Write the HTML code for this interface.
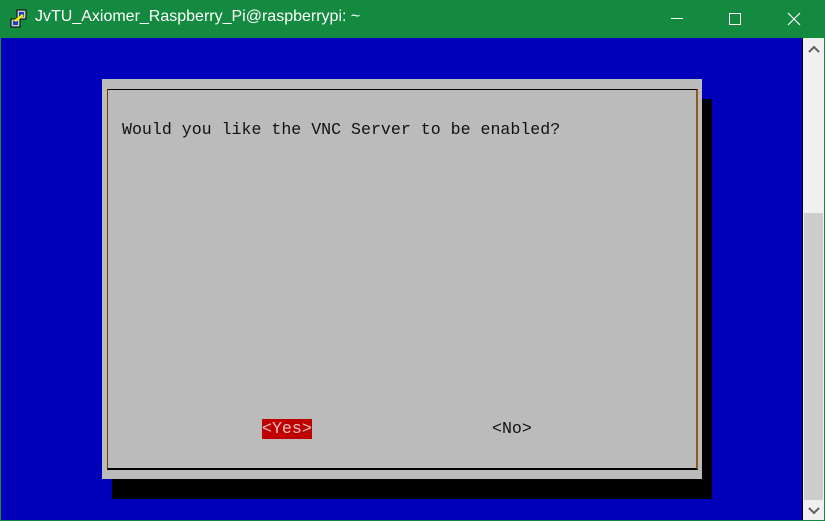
<!DOCTYPE html>
<html><head><meta charset="utf-8"><style>
*{margin:0;padding:0;box-sizing:border-box}
body{width:825px;height:521px;overflow:hidden;background:#138a3f;position:relative;font-family:"Liberation Sans",sans-serif}
.title{position:absolute;left:35px;top:8px;color:#fff;font-size:16px}
.term{position:absolute;left:1px;top:38px;width:801px;height:482px;background:#0000bb}
.sep{position:absolute;left:802px;top:38px;width:1px;height:482px;background:#000}
.sb{position:absolute;left:803px;top:38px;width:21px;height:482px;background:#f0f0f0}
.thumb{position:absolute;left:804px;top:213px;width:19px;height:287px;background:#cdcdcd}
.shadow{position:absolute;left:112px;top:99px;width:600px;height:400px;background:#000}
.dlg{position:absolute;left:102px;top:79px;width:600px;height:400px;background:#bbbbbb}
.inner{position:absolute;left:107px;top:89px;width:591px;height:381px;border-top:1px solid #000;border-left:1px solid #6b3f00;border-right:2px solid #8a5a20;border-bottom:2px solid #000}
.mono{position:absolute;font-family:"Liberation Mono",monospace;font-size:16.6px;line-height:19px;color:#111;white-space:pre}
.yes{background:#c00000;color:#e8c0c0}
</style></head><body>
<svg style="position:absolute;left:9px;top:9px" width="20" height="20" viewBox="0 0 20 20">
<rect x="8" y="1" width="9" height="9" fill="#ccc" stroke="#000"/><rect x="10" y="3" width="5" height="5" fill="#2040c0"/>
<rect x="2" y="10" width="9" height="8" fill="#ccc" stroke="#000"/><rect x="4" y="12" width="5" height="4" fill="#2040c0"/>
<path d="M6 12 L14 6" stroke="#ee0" stroke-width="2.5"/></svg>
<div class="title">JvTU_Axiomer_Raspberry_Pi@raspberrypi: ~</div>
<svg style="position:absolute;left:650px;top:0" width="175" height="38">
<line x1="21" y1="18.5" x2="33" y2="18.5" stroke="#fff"/>
<rect x="79.5" y="13.5" width="11" height="11" fill="none" stroke="#fff"/>
<path d="M138 13 L150 25 M150 13 L138 25" stroke="#fff" stroke-width="1.2"/></svg>
<div class="term"></div><div class="sep"></div><div class="sb"></div><div class="thumb"></div>
<svg style="position:absolute;left:805px;top:44px" width="18" height="12"><path d="M4 8 L9 3 L14 8" stroke="#606060" stroke-width="2" fill="none"/></svg>
<svg style="position:absolute;left:805px;top:505px" width="18" height="12"><path d="M4 3 L9 8 L14 3" stroke="#606060" stroke-width="2" fill="none"/></svg>
<div class="shadow"></div><div class="dlg"></div><div class="inner"></div>
<div class="mono" style="left:122px;top:120px">Would you like the VNC Server to be enabled?</div>
<div class="mono yes" style="left:262px;top:419px;width:50px;height:20px">&lt;Yes&gt;</div>
<div class="mono" style="left:492px;top:419px">&lt;No&gt;</div>
</body></html>
